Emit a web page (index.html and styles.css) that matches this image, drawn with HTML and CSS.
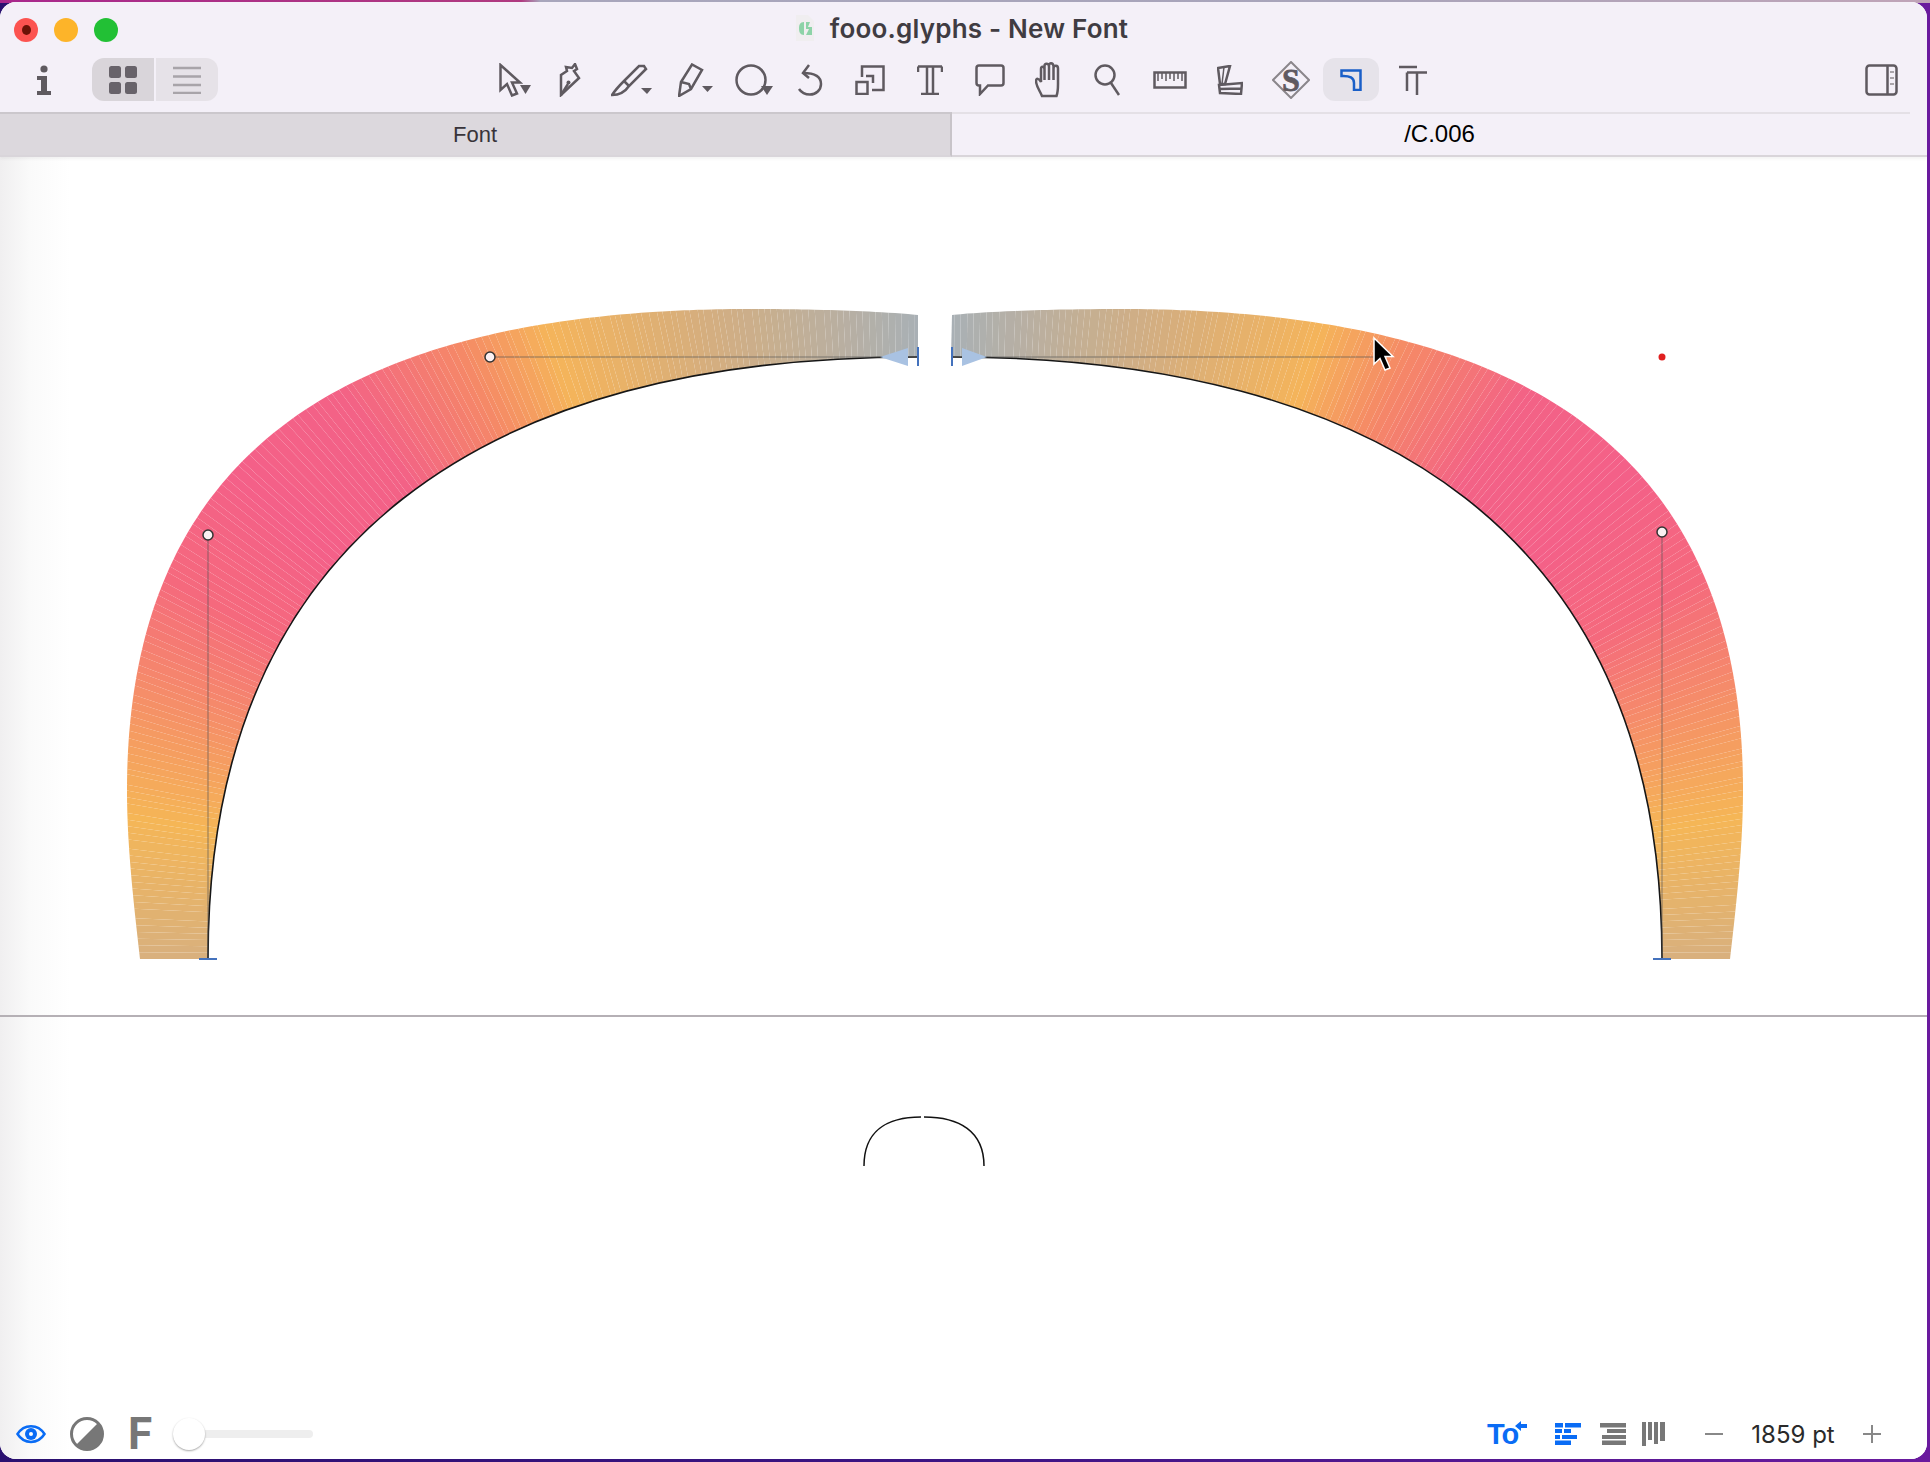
FILE: index.html
```html
<!DOCTYPE html>
<html lang="en">

<head>
  <meta charset="UTF-8" />
  <title>fooo.glyphs - New Font</title>
  <link rel="stylesheet" href="styles.css">
</head>

<body>
  <div class="window">
    <div class="titlebar">
      <div class="lights">
        <span class="light red"><i></i></span>
        <span class="light yellow"></span>
        <span class="light green"></span>
      </div>
      <div class="title">
        <svg class="doc" width="20" height="28" viewBox="0 0 20 28">
          <path d="M1 1H13L19 7V27H1Z" fill="#f0eef0" />
          <path d="M9 8C5 8 4 11 4 14C4 18 5 21 9 21Z" fill="#8dd3a8" />
          <path d="M11 8H15L13 13L17 13V21H11L14 15H11Z" fill="#8dd3a8" />
        </svg>
        <span>fooo.glyphs - New Font</span>
      </div>
    </div>

    <div class="toolbar">
      <svg class="info" width="16" height="30" viewBox="0 0 16 30">
        <circle cx="8" cy="4" r="3.6" />
        <path d="M1 11H11V26H15V30H1V26H5V15H1Z" />
      </svg>

      <div class="seg">
        <div class="seg-btn on">
          <svg width="28" height="28" viewBox="0 0 28 28">
            <rect x="0" y="0" width="12" height="12" rx="2.5" />
            <rect x="16" y="0" width="12" height="12" rx="2.5" />
            <rect x="0" y="16" width="12" height="12" rx="2.5" />
            <rect x="16" y="16" width="12" height="12" rx="2.5" />
          </svg>
        </div>
        <div class="seg-btn">
          <svg width="28" height="28" viewBox="0 0 28 28">
            <path d="M0 2H28M0 10.500H28M0 19H28M0 27H28" />
          </svg>
        </div>
      </div>

      <div class="tools">
        <div class="tool">
          <svg width="32" height="34" viewBox="0 0 32 34">
            <path d="M1.500 2V27L8 21L13 32.500L18 30.500L13 19.500H21Z" />
            <path class="solid" d="M21 22H32L26.500 31Z" />
          </svg>
        </div>
        <div class="tool">
          <svg width="22" height="34" viewBox="0 0 22 34">
            <path d="M2 32V12L8 8L7 4L13 5L16 1L18 6L15 8L20 15Z" />
            <path d="M2 32L9 21" />
            <circle class="solid" cx="9.500" cy="19.500" r="2" />
          </svg>
        </div>
        <div class="tool">
          <svg width="42" height="34" viewBox="0 0 42 34">
            <path d="M1 32C5 26 9 22 13 18L28 3H33L35 6L18 23C14 29 8 32 1 32Z" />
            <path d="M13 18L18 23" />
            <path class="solid" d="M30 25H41L36 31Z" />
          </svg>
        </div>
        <div class="tool">
          <svg width="35" height="34" viewBox="0 0 35 34">
            <path d="M1 33L3 19L14 1.500L24 7L13 26Z" />
            <path d="M3 19L11 21L13 26" />
            <path class="solid" d="M24 23H35L29.500 29Z" />
          </svg>
        </div>
        <div class="tool">
          <svg width="38" height="32" viewBox="0 0 38 32">
            <circle cx="16" cy="16" r="14.500" />
            <path class="solid" d="M26 22H38L32 31Z" />
          </svg>
        </div>
        <div class="tool">
          <svg width="26" height="32" viewBox="0 0 26 32">
            <path d="M12 1L6 9L12 14" />
            <path d="M6 9C16 9 24 12 24 20C24 26 19 30.500 13 30.500C8 30.500 4 28 2 25" />
          </svg>
        </div>
        <div class="tool">
          <svg width="30" height="30" viewBox="0 0 30 30">
            <rect x="1.500" y="17" width="11" height="12" />
            <path d="M7 12V1.500H28.500V25H17" />
            <path d="M11 11H18V18" />
          </svg>
        </div>
        <div class="tool">
          <svg width="26" height="30" viewBox="0 0 26 30">
            <path d="M1 1.500H25M4 29H22M10 1.500V29M16 1.500V29M1 1.500V7M25 1.500V7" />
          </svg>
        </div>
        <div class="tool">
          <svg width="30" height="32" viewBox="0 0 30 32">
            <path d="M4 1.500H26Q28.500 1.500 28.500 4V19Q28.500 21.500 26 21.500H13L5 30V21.500H4Q1.500 21.500 1.500 19V4Q1.500 1.500 4 1.500Z" />
          </svg>
        </div>
        <div class="tool">
          <svg width="28" height="36" viewBox="0 0 28 36">
            <path d="M7 34C5 29 1 24 1 19C1 16 4 16 6 20V7C6 4 9 4 9.500 7V4C9.500 1 13.500 1 14 4V3.500C14 0.500 18 0.500 18.500 4V6C19 3 23 3 23 6.500V22C23 27 23 30 21.500 34Z" />
            <path d="M9.500 7V18M14 4V18M18.500 6V18" />
          </svg>
        </div>
        <div class="tool">
          <svg width="26" height="32" viewBox="0 0 26 32">
            <circle cx="11" cy="11" r="9.500" />
            <path d="M17 19L25 31" />
          </svg>
        </div>
        <div class="tool">
          <svg width="34" height="18" viewBox="0 0 34 18">
            <rect x="1.500" y="1.500" width="31" height="15" />
            <path class="thin" d="M5 2V10M9 2V8M13 2V10M17 2V8M21 2V10M25 2V8M29 2V10" />
          </svg>
        </div>
        <div class="tool">
          <svg width="26" height="30" viewBox="0 0 26 30">
            <path d="M1 3L13 1L8 19H3Z" />
            <path d="M7 2L5 19" class="thin" />
            <path d="M2 20L25 18L24 29L3 28ZM2.500 24L24.500 23.500" />
          </svg>
        </div>
        <div class="tool">
          <svg width="38" height="38" viewBox="0 0 38 38">
            <path class="diamond" d="M19 1L37 19L19 37L1 19Z" />
            <text class="s-glyph" x="19" y="30">S</text>
          </svg>
        </div>
        <div class="tool active">
          <svg width="22" height="22" viewBox="0 0 22 22">
            <path d="M1.500 1.500H20.500V21H14V14C14 9 10 6.500 1.500 7Z" />
          </svg>
        </div>
        <div class="tool">
          <svg width="28" height="30" viewBox="0 0 28 30">
            <path d="M0 2H18M8 7.500H28M8 7.500V26M18 7.500V30" />
          </svg>
        </div>
      </div>

      <svg class="sidebar" width="33" height="32" viewBox="0 0 33 32">
        <rect x="1.500" y="1.500" width="30" height="29" rx="3" />
        <path d="M22.500 2V30" />
        <path class="thin" d="M25 8H29M25 14H29M25 20H29" />
      </svg>
    </div>

    <div class="tabs">
      <div class="tab tab-font">Font</div>
      <div class="tab tab-glyph">/C.006</div>
    </div>

    <div class="edit">
      <svg class="glyph" viewBox="0 157 1927 858">
        <g id="band"></g>
        <path class="outline" d="M208 959C208 535 490 357 918 357" />
        <path class="outline" d="M951 357C1374 357 1662 532 1662 959" />
        <path class="handle" d="M490 357H918M951 357H1374M208 535V959M1662 532V959" />
        <path class="arrow" d="M908 348V366L880 357Z" />
        <path class="arrow" d="M962 348V366L987 357Z" />
        <path class="tick" d="M918 347V366M952 347V366M199 959H217M1653 959H1671" />
        <circle class="node" cx="490" cy="357" r="5" />
        <circle class="node" cx="208" cy="535" r="5" />
        <circle class="node" cx="1662" cy="532" r="5" />
        <circle class="corner" cx="1662" cy="357" r="3.500" />
        <path class="cursor" d="M1374 338V364L1380 358.500L1385 370L1390 368L1385 356.500H1393Z" />
      </svg>
    </div>

    <div class="preview">
      <svg class="small" width="122" height="51" viewBox="0 0 122 51">
        <path d="M1 50C1 15 24 1 58 1M61 1C96 1 121 15 121 50" />
      </svg>

      <div class="bottom">
        <div class="bottom-left">
          <svg class="eye" width="30" height="20" viewBox="0 0 30 20">
            <path class="eye-line" d="M1.500 10C8 -0.500 22 -0.500 28.500 10C22 20.500 8 20.500 1.500 10Z" />
            <circle class="eye-fill" cx="15" cy="10" r="6" />
            <circle cx="15" cy="10" r="2" fill="#ffffff" />
          </svg>
          <svg width="34" height="34" viewBox="0 0 34 34">
            <circle cx="17" cy="17" r="15.500" fill="#ffffff" stroke="#777777" stroke-width="3" />
            <path d="M28 6A15.500 15.500 0 0 1 6 28Z" fill="#777777" />
          </svg>
          <span class="font-f">F</span>
          <div class="slider">
            <div class="knob"></div>
            <div class="track"></div>
          </div>
        </div>

        <div class="bottom-right">
          <div class="to-icon">
            <span>To</span>
            <svg width="12" height="10" viewBox="0 0 12 10">
              <path d="M0 5L6 0V3H12V7H6V10Z" fill="#0a6cf5" />
            </svg>
          </div>
          <svg class="blue-bars" width="26" height="22" viewBox="0 0 26 22">
            <path d="M0 0H8V4.500H0ZM10 0H26V4.500H10ZM0 6H7V10H0ZM9 6H16V10H9ZM0 12H5V16H0ZM7 12H22V16H7ZM0 17.500H16V22H0Z" />
          </svg>
          <svg class="grey-bars" width="26" height="22" viewBox="0 0 26 22">
            <path d="M0 0H26V4.500H0ZM7 6H26V10H7ZM2 12H26V16H2ZM2 17.500H26V22H2Z" />
          </svg>
          <svg class="grey-bars" width="23" height="24" viewBox="0 0 23 24">
            <path d="M0 0H4V24H0ZM6 0H10V18H6ZM12 0H16V22H12ZM18 0H23V19H18Z" />
          </svg>
          <span class="zoom-btn minus"></span>
          <span class="size">1859 pt</span>
          <span class="zoom-btn plus"></span>
        </div>
      </div>
    </div>
  </div>

  <script src="glyph.js"></script>
</body>

</html>
```

FILE: styles.css
```css
html,
body {
  margin: 0;
  padding: 0;
  height: 100%;
  overflow: hidden;
}

body {
  background:
    linear-gradient(90deg, #a9288c 0, #b03a80 27%, #a8a6bc 28%, #a8a4ba 70%, #c0a4b8 100%) top / 100% 3px no-repeat,
    linear-gradient(90deg, #2a1070 0, #3c1484 50%, #6a1a9e 100%);
  font-family: "Liberation Sans", Arial, sans-serif;
  color: #111;
}

.window {
  width: 1927px;
  height: 1457px;
  margin-top: 2px;
  border-radius: 16px;
  overflow: hidden;
  background: #fff;
  display: flex;
  flex-direction: column;
}

.titlebar {
  height: 56px;
  flex: none;
  position: relative;
  background: #f4f0f8;
  display: flex;
  align-items: center;
  justify-content: center;
}

.lights {
  position: absolute;
  left: 14px;
  top: 16px;
  display: flex;
  gap: 16px;
}

.light {
  width: 24px;
  height: 24px;
  border-radius: 50%;
  display: flex;
  align-items: center;
  justify-content: center;
}

.light i {
  width: 9px;
  height: 10px;
  border-radius: 50%;
  background: #6b1206;
}

.red { background: #fc5350; }
.yellow { background: #fdb429; }
.green { background: #22c035; }

.title {
  display: flex;
  align-items: center;
  gap: 15px;
  margin-left: -4px;
  margin-top: -4px;
  font-family: Inter, "Liberation Sans", sans-serif;
  font-size: 26px;
  font-weight: 600;
  letter-spacing: 0.2px;
  color: #403c42;
}

.toolbar {
  height: 43px;
  flex: none;
  padding: 0 29px 11px 36px;
  background: #f4f0f8;
  display: flex;
  align-items: center;
}

.info {
  fill: #5f5a60;
  flex: none;
}

.seg {
  display: flex;
  gap: 2px;
  margin-left: 40px;
  height: 43px;
}

.seg-btn {
  display: flex;
  align-items: center;
  justify-content: center;
  width: 62px;
  height: 43px;
  background: #e6e2e8;
  border-radius: 0 12px 12px 0;
}

.seg-btn.on {
  background: #d9d5da;
  border-radius: 12px 0 0 12px;
}

.seg-btn.on svg {
  fill: #68636a;
}

.seg-btn svg path {
  stroke: #a8a4a9;
  stroke-width: 2.500;
}

/* column widths follow the spacing of the real toolbar, it isn't even */
.tools {
  display: grid;
  grid-template-columns: 56px 54px 70px 56px 62px 50px 70px 50px 70px 48px 68px 58px 62px 60px 60px 64px;
  margin-left: 269px;
  height: 43px;
}

.tool {
  display: flex;
  align-items: center;
  justify-content: center;
  height: 43px;
}

.tool svg {
  fill: none;
  stroke: #5f5a60;
  stroke-width: 2.500;
}

.tool svg .solid {
  fill: #5f5a60;
  stroke: none;
}

.tool svg .thin {
  stroke-width: 1.500;
}

.tool svg .diamond {
  stroke: #8a868b;
  stroke-width: 2;
}

.tool svg .s-glyph {
  font-family: "Liberation Serif", serif;
  font-weight: bold;
  font-size: 32px;
  text-anchor: middle;
  fill: #5f5a60;
  stroke: #5f5a60;
  stroke-width: 0.800;
}

.tool.active {
  width: 56px;
  justify-self: center;
  background: #e6e3ea;
  border-radius: 12px;
}

.tool.active svg {
  stroke: #1a5fc8;
}

.sidebar {
  margin-left: auto;
  fill: none;
  stroke: #5f5a60;
  stroke-width: 2.500;
  flex: none;
}

.sidebar .thin {
  stroke: #a8a4a9;
  stroke-width: 2;
}

.tabs {
  height: 45px;
  flex: none;
  display: flex;
  background: #f4f0f8;
  box-shadow: 0 2px 3px rgba(0, 0, 0, 0.05);
  position: relative;
}

.tab {
  display: flex;
  align-items: center;
  justify-content: center;
  font-size: 22px;
  box-sizing: border-box;
  border-bottom: 2px solid #d9d5da;
}

.tab-font {
  width: 952px;
  background: #dcd8dd;
  border-top: 2px solid #cbc7cc;
  border-right: 2px solid #c8c4c9;
  color: #38343a;
}

.tab-glyph {
  flex: 1;
  font-size: 24px;
  color: #000;
  background: linear-gradient(#e4e0e6, #e4e0e6) top left / calc(100% - 17px) 2px no-repeat;
}

.edit {
  height: 858px;
  flex: none;
  background: linear-gradient(90deg, #f0eff0, #fafafa 30px, #fff 70px);
  border-bottom: 2px solid #b5b0b5;
}

.glyph {
  display: block;
  width: 1927px;
  height: 858px;
}

.outline {
  fill: none;
  stroke: #161616;
  stroke-width: 1.600;
}

.handle {
  fill: none;
  stroke: #555;
  stroke-opacity: 0.65;
  stroke-width: 1;
}

.arrow {
  fill: #a9c2e2;
}

.tick {
  fill: none;
  stroke: #4472bd;
  stroke-width: 2;
}

.node {
  fill: #faf0f2;
  stroke: #333;
  stroke-width: 1.500;
}

.corner {
  fill: #e02020;
}

.cursor {
  fill: #000;
  stroke: #fff;
  stroke-width: 1.500;
}

.preview {
  flex: 1;
  position: relative;
  background: linear-gradient(90deg, #f0eff0, #fafafa 30px, #fff 70px);
}

.small {
  display: block;
  margin: 99px 0 0 863px;
  fill: none;
  stroke: #111;
  stroke-width: 1.500;
}

.bottom {
  position: absolute;
  left: 16px;
  right: 46px;
  bottom: 7px;
  height: 36px;
  display: flex;
  align-items: center;
  justify-content: space-between;
}

.bottom-left,
.bottom-right {
  display: flex;
  align-items: center;
}

.eye {
  margin-right: 24px;
}

.eye-line {
  fill: none;
  stroke: #0a6cf5;
  stroke-width: 2.500;
}

.eye-fill {
  fill: #0a6cf5;
}

.font-f {
  margin-left: 24px;
  width: 27px;
  font-family: Roboto, "Liberation Sans", sans-serif;
  font-weight: bold;
  font-size: 44px;
  line-height: 36px;
  color: #777;
}

.slider {
  display: flex;
  align-items: center;
  margin-left: 18px;
}

.knob {
  width: 32px;
  height: 32px;
  border-radius: 50%;
  background: #fff;
  box-shadow: 0 1px 2px rgba(0, 0, 0, 0.35);
  position: relative;
}

.track {
  width: 108px;
  height: 8px;
  border-radius: 0 4px 4px 0;
  background: #eeeeee;
}

.to-icon {
  display: flex;
  align-items: flex-start;
  width: 34px;
  margin-right: 34px;
  color: #0a6cf5;
  font-weight: bold;
  font-size: 29px;
  line-height: 30px;
  letter-spacing: -1px;
}

.to-icon svg {
  flex: none;
  margin: 2px 0 0 -3px;
}

.blue-bars {
  fill: #0a6cf5;
  margin-right: 19px;
}

.grey-bars {
  fill: #777;
  margin-right: 16px;
}

.zoom-btn {
  width: 18px;
  height: 18px;
  position: relative;
  flex: none;
}

.zoom-btn::before {
  content: "";
  position: absolute;
  left: 0;
  right: 0;
  top: 8px;
  height: 2px;
  background: #888;
}

.plus::after {
  content: "";
  position: absolute;
  top: 0;
  bottom: 0;
  left: 8px;
  width: 2px;
  background: #888;
}

.minus {
  margin-left: 24px;
}

.size {
  width: 140px;
  text-align: center;
  font-family: Inter, "Liberation Sans", sans-serif;
  font-size: 24px;
  color: #2a2a2a;
}
```

FILE: glyph.js
```js
// Draw the gradient band of the glyph as many small quads.
// The thin seams between them are there in the original too.
const SVG_NS = 'http://www.w3.org/2000/svg';
const STEPS = 170;

const innerLeft = [[[208, 959], [208, 535], [490, 357], [918, 357]]];
const innerRight = [[[1662, 959], [1662, 532], [1374, 357], [951, 357]]];

const outerLeft = [
  [[140, 959], [132, 890], [127, 840], [127, 790]],
  [[127, 790], [127, 434], [370, 309], [751, 309]],
  [[751, 309], [810, 309], [880, 311], [918, 315]]
];
const outerRight = outerLeft.map(seg => seg.map(p => [1870 - p[0], p[1]]));

const stops = [
  [0, [216, 176, 126]],
  [0.12, [245, 182, 86]],
  [0.2, [245, 150, 100]],
  [0.31, [245, 105, 125]],
  [0.4, [244, 96, 136]],
  [0.5, [243, 98, 134]],
  [0.6, [245, 138, 102]],
  [0.67, [245, 180, 90]],
  [0.8, [214, 174, 125]],
  [1, [168, 176, 182]]
];

function bezier(seg, t) {
  const u = 1 - t;
  return [0, 1].map(i =>
    u * u * u * seg[0][i] + 3 * u * u * t * seg[1][i] +
    3 * u * t * t * seg[2][i] + t * t * t * seg[3][i]);
}

function finePoints(segs) {
  const fine = [];
  segs.forEach(seg => {
    for (let i = 0; i < 400; i++) fine.push(bezier(seg, i / 400));
  });
  fine.push(bezier(segs[segs.length - 1], 1));
  return fine;
}

// Points at even distances along a list of bezier segments
function evenPoints(segs, count) {
  const fine = finePoints(segs);
  const dist = [0];
  for (let i = 1; i < fine.length; i++) {
    dist.push(dist[i - 1] + Math.hypot(fine[i][0] - fine[i - 1][0], fine[i][1] - fine[i - 1][1]));
  }

  const total = dist[dist.length - 1];
  const points = [];
  let j = 0;
  for (let i = 0; i <= count; i++) {
    const want = total * i / count;
    while (j < fine.length - 1 && dist[j] < want) j++;
    points.push(fine[j]);
  }
  return points;
}

// Where the normal of the inner curve at point i meets the outer curve
function normalHit(inner, i, outerFine) {
  const p = inner[i];
  const before = inner[Math.max(i - 1, 0)];
  const after = inner[Math.min(i + 1, inner.length - 1)];
  const tx = after[0] - before[0];
  const ty = after[1] - before[1];
  const len = Math.hypot(tx, ty);

  let best = outerFine[0];
  let bestOff = Infinity;
  outerFine.forEach(q => {
    const dx = q[0] - p[0];
    const dy = q[1] - p[1];
    // along the tangent should be nil, then q lies on the normal
    const off = Math.abs(dx * tx + dy * ty) / len;
    if (off < bestOff) {
      bestOff = off;
      best = q;
    }
  });
  return best;
}

function colorAt(s) {
  let k = 0;
  while (k < stops.length - 2 && s > stops[k + 1][0]) k++;
  const a = stops[k];
  const b = stops[k + 1];
  const f = (s - a[0]) / (b[0] - a[0]);
  const rgb = a[1].map((v, i) => Math.round(v + (b[1][i] - v) * f));
  return `rgb(${rgb.join(',')})`;
}

function drawSide(inner, outer) {
  const band = document.getElementById('band');
  const a = evenPoints(inner, STEPS);
  const outerFine = finePoints(outer);
  const b = a.map((p, i) => normalHit(a, i, outerFine));
  // the ends stay on the ends of the outer curve
  b[0] = outerFine[0];
  b[STEPS] = outerFine[outerFine.length - 1];

  for (let i = 0; i < STEPS; i++) {
    const quad = document.createElementNS(SVG_NS, 'polygon');
    quad.setAttribute('points', [a[i], a[i + 1], b[i + 1], b[i]].map(p => p.join(',')).join(' '));
    quad.setAttribute('fill', colorAt((i + 0.5) / STEPS));
    band.appendChild(quad);
  }
}

drawSide(innerLeft, outerLeft);
drawSide(innerRight, outerRight);
```
